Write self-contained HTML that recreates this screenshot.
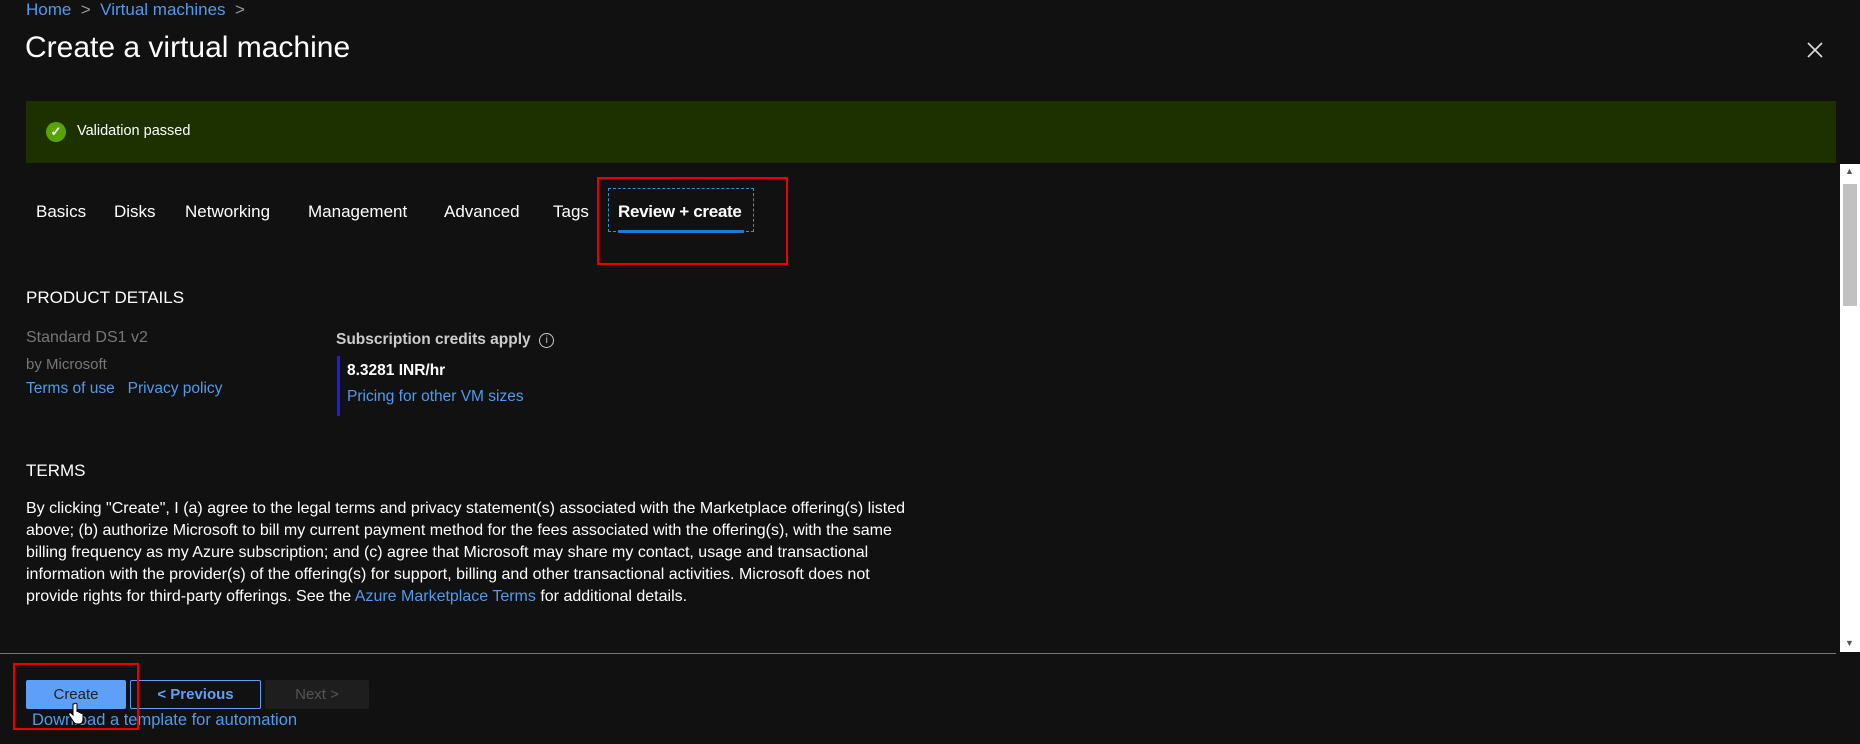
<!DOCTYPE html>
<html><head><meta charset="utf-8"><style>
*{margin:0;padding:0;box-sizing:border-box}
body{width:1860px;height:744px;background:#111;color:#fff;font-family:"Liberation Sans",sans-serif;position:relative;overflow:hidden}
.a{position:absolute;white-space:nowrap}
.l{color:#4f9bef}
.tab{position:absolute;top:202px;font-size:17px;color:#fff}
.p{font-size:16px;line-height:22px;color:#fff}
</style></head><body>
<div class="a l" style="left:26px;top:0px;font-size:17px">Home <span style="color:#999">&nbsp;&gt;&nbsp;</span> Virtual machines <span style="color:#999">&nbsp;&gt;</span></div>
<div class="a" style="left:25px;top:31px;font-size:30px">Create a virtual machine</div>
<svg class="a" style="left:1807px;top:42px" width="16" height="16" viewBox="0 0 16 16"><path d="M1 1L15 15M15 1L1 15" stroke="#ddd" stroke-width="1.6"/></svg>
<div class="a" style="left:26px;top:101px;width:1810px;height:62px;background:#1d3100"></div>
<div class="a" style="left:46px;top:122px;width:20px;height:20px;border-radius:50%;background:#57a300;color:#fff;font-size:13px;text-align:center;line-height:20px;font-weight:bold">✓</div>
<div class="a" style="left:77px;top:123px;font-size:14.5px">Validation passed</div>
<div class="tab" style="left:36px">Basics</div>
<div class="tab" style="left:114px">Disks</div>
<div class="tab" style="left:185px">Networking</div>
<div class="tab" style="left:308px">Management</div>
<div class="tab" style="left:444px">Advanced</div>
<div class="tab" style="left:553px">Tags</div>
<div class="tab" style="left:618px;font-weight:bold;letter-spacing:-0.3px">Review + create</div>
<div class="a" style="left:608px;top:188px;width:146px;height:44px;border:1px dashed #3b8ed6"></div>
<div class="a" style="left:618px;top:230px;width:126px;height:3px;background:#1f7ad6"></div>
<div class="a" style="left:597px;top:177px;width:191px;height:88px;border:2px solid #e00"></div>
<div class="a" style="left:1840px;top:164px;width:20px;height:488px;background:#fff"></div>
<div class="a" style="left:1843px;top:184px;width:14px;height:122px;background:#c1c1c1"></div>
<div class="a" style="left:1845px;top:166px;font-size:9px;color:#555">▲</div>
<div class="a" style="left:1845px;top:638px;font-size:9px;color:#555">▼</div>
<div class="a" style="left:26px;top:288px;font-size:17px">PRODUCT DETAILS</div>
<div class="a" style="left:26px;top:329px;font-size:16px;color:#777">Standard DS1 v2</div>
<div class="a" style="left:26px;top:356px;font-size:15px;color:#777">by Microsoft</div>
<div class="a l" style="left:26px;top:380px;font-size:15.5px">Terms of use &nbsp; Privacy policy</div>
<div class="a" style="left:336px;top:331px;font-size:15.5px;color:#ccc;font-weight:bold">Subscription credits apply &nbsp;<span style="display:inline-block;width:15px;height:15px;border:1px solid #ccc;border-radius:50%;font-size:10px;text-align:center;line-height:13px;font-weight:normal;vertical-align:1px">i</span></div>
<div class="a" style="left:337px;top:356px;width:3px;height:60px;background:#1a1aff"></div>
<div class="a" style="left:347px;top:362px;font-size:15.5px;font-weight:bold">8.3281 INR/hr</div>
<div class="a l" style="left:347px;top:388px;font-size:15.5px">Pricing for other VM sizes</div>
<div class="a" style="left:26px;top:461px;font-size:17px">TERMS</div>
<div class="a p" style="left:26px;top:498px">By clicking "Create", I (a) agree to the legal terms and privacy statement(s) associated with the Marketplace offering(s) listed<br>above; (b) authorize Microsoft to bill my current payment method for the fees associated with the offering(s), with the same<br>billing frequency as my Azure subscription; and (c) agree that Microsoft may share my contact, usage and transactional<br>information with the provider(s) of the offering(s) for support, billing and other transactional activities. Microsoft does not<br>provide rights for third-party offerings. See the <span class="l">Azure Marketplace Terms</span> for additional details.</div>
<div class="a" style="left:0;top:653px;width:1836px;height:1px;background:#777"></div>
<div class="a" style="left:26px;top:680px;width:100px;height:29px;background:#5ea0f8;border-radius:2px;color:#222;font-size:15px;text-align:center;line-height:29px">Create</div>
<div class="a" style="left:130px;top:680px;width:131px;height:29px;border:1px solid #5ea0f8;border-radius:2px;color:#5ea0f8;font-size:15px;font-weight:bold;text-align:center;line-height:27px">&lt; Previous</div>
<div class="a" style="left:265px;top:680px;width:104px;height:29px;background:#1e1e1e;border-radius:2px;color:#555;font-size:15px;text-align:center;line-height:29px">Next &gt;</div>
<div class="a l" style="left:32px;top:711px;font-size:16.5px">Download a template for automation</div>
<div class="a" style="left:13px;top:663px;width:126px;height:67px;border:2px solid #e00"></div>
<svg class="a" style="left:68px;top:702px" width="16" height="24" viewBox="0 0 16 24"><path d="M5 2v11l-2-2c-1-1-3 0-2 2l4 6c1 2 2 3 5 3h1c3 0 4-2 4-5v-5c0-1-2-1-2 0v-1c0-1-2-1-2 0v-1c0-1-2-1-2 0V2c0-1-3-1-3 0z" fill="#fff" stroke="#000" stroke-width="1"/></svg>
</body></html>
